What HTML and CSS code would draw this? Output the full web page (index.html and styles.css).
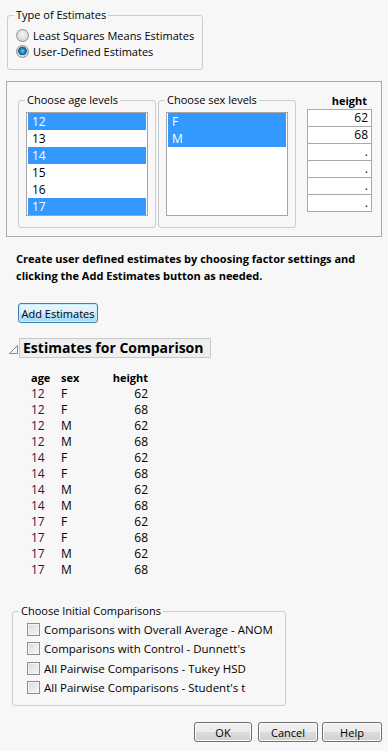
FILE: index.html
```html
<!DOCTYPE html>
<html>
    <head>
        <meta charset="UTF-8">
        <title>Estimates</title>
        <meta name="viewport" content="width=device-width, initial-scale=1.0">
        <link rel="stylesheet" href="styles.css">
    </head>
    <body>
        <div class="dialog">
            <fieldset class="group type-group">
                <legend>Type of Estimates</legend>
                <label class="radio-row"><span class="radio"></span>Least Squares Means Estimates</label>
                <label class="radio-row"><span class="radio checked"></span>User-Defined Estimates</label>
            </fieldset>

            <!-- factor level pickers and the response column -->
            <div class="panel">
                <fieldset class="group level-group">
                    <legend>Choose age levels</legend>
                    <ul class="listbox">
                        <li class="sel">12</li>
                        <li>13</li>
                        <li class="sel">14</li>
                        <li>15</li>
                        <li>16</li>
                        <li class="sel">17</li>
                    </ul>
                </fieldset>
                <fieldset class="group level-group sex-group">
                    <legend>Choose sex levels</legend>
                    <ul class="listbox">
                        <li class="sel">F</li>
                        <li class="sel">M</li>
                    </ul>
                </fieldset>
                <div class="resp-col">
                    <div class="resp-head">height</div>
                    <div class="cell">62</div>
                    <div class="cell">68</div>
                    <div class="cell">.</div>
                    <div class="cell">.</div>
                    <div class="cell">.</div>
                    <div class="cell last">.</div>
                </div>
            </div>

            <p class="hint">Create user defined estimates by choosing factor settings and<br>clicking the Add Estimates button as needed.</p>

            <button class="btn btn-focus add-btn">Add Estimates</button>

            <div class="outline">
                <svg class="disclosure" width="9" height="9" viewBox="0 0 9 9">
                    <polygon points="0.5,8.5 8.5,0.5 8.5,8.5" fill="#f4f4f4" stroke="#8a8a8a" stroke-width="1"/>
                </svg>
                <div class="outline-title">Estimates for Comparison</div>
            </div>

            <div class="est-table">
                <div class="th">age</div><div class="th">sex</div><div class="th num">height</div>
                <div class="age">12</div><div>F</div><div class="num">62</div>
                <div class="age">12</div><div>F</div><div class="num">68</div>
                <div class="age">12</div><div>M</div><div class="num">62</div>
                <div class="age">12</div><div>M</div><div class="num">68</div>
                <div class="age">14</div><div>F</div><div class="num">62</div>
                <div class="age">14</div><div>F</div><div class="num">68</div>
                <div class="age">14</div><div>M</div><div class="num">62</div>
                <div class="age">14</div><div>M</div><div class="num">68</div>
                <div class="age">17</div><div>F</div><div class="num">62</div>
                <div class="age">17</div><div>F</div><div class="num">68</div>
                <div class="age">17</div><div>M</div><div class="num">62</div>
                <div class="age">17</div><div>M</div><div class="num">68</div>
            </div>

            <fieldset class="group cmp-group">
                <legend>Choose Initial Comparisons</legend>
                <label class="check-row"><span class="check"></span>Comparisons with Overall Average - ANOM</label>
                <label class="check-row"><span class="check"></span>Comparisons with Control - Dunnett's</label>
                <label class="check-row"><span class="check"></span>All Pairwise Comparisons - Tukey HSD</label>
                <label class="check-row"><span class="check"></span>All Pairwise Comparisons - Student's t</label>
            </fieldset>

            <div class="actions">
                <button class="btn ok-btn">OK</button>
                <button class="btn cancel-btn">Cancel</button>
                <button class="btn help-btn">Help</button>
            </div>
        </div>
    </body>
</html>
```

FILE: styles.css
```css
body {
    margin: 0;
    background: #f7f7f7;
    font-family: "Open Sans", "Noto Sans", sans-serif;
    font-size: 11px;
    color: #000;
}
.dialog {
    width: 388px;
    height: 751px;
    overflow: hidden;
}

/* group boxes */
.group {
    margin: 0;
    padding: 0;
    border: 1px solid #c9cdd0;
    border-radius: 3px;
    box-sizing: border-box;
}
.group legend {
    margin-left: 6px;
    padding: 0 2px;
    line-height: 16px;
    height: 16px;
}
.type-group {
    margin: 7px 0 0 7px;
    width: 196px;
    padding: 4px 0 10px 0;
}
.radio-row,
.check-row {
    display: flex;
    align-items: center;
    height: 16px;
    white-space: nowrap;
}
.radio-row {
    margin-left: 8px;
}
.radio {
    width: 11px;
    height: 11px;
    border: 1px solid #8e8f8f;
    border-radius: 50%;
    background: radial-gradient(circle at 50% 40%, #f4f4f4, #d8d8d8 70%, #c4c4c4);
    margin-right: 4px;
    flex: none;
}
.radio.checked {
    background: radial-gradient(circle at 50% 45%, #7ed0f4 0, #2a8ec8 2px, #115a8a 4px, #d8d8d8 4.6px, #cfcfcf);
}

/* main panel */
.panel {
    margin: 11px 0 0 6px;
    width: 376px;
    box-sizing: border-box;
    border: 1px solid #a9a9a9;
    padding: 10px 0 8px 11px;
    display: flex;
    align-items: flex-start;
}
.level-group {
    width: 138px;
    padding: 4px 0 11px 0;
}
.sex-group {
    margin-left: 2px;
}
.listbox {
    list-style: none;
    margin: 0 0 0 7px;
    padding: 0 1px;
    width: 122px;
    height: 104px;
    box-sizing: border-box;
    border: 1px solid #a5a5a5;
    background: #fff;
}
.listbox li {
    height: 17px;
    line-height: 17px;
    padding-left: 4px;
    font-size: 12px;
}
.listbox li.sel {
    background: #3399ff;
    color: #fff;
}
.resp-col {
    margin-left: 11px;
    width: 65px;
}
.resp-head {
    height: 17px;
    line-height: 17px;
    text-align: right;
    padding-right: 5px;
    font-weight: bold;
}
.cell {
    height: 17px;
    line-height: 16px;
    box-sizing: border-box;
    border: 1px solid #a9a9a9;
    border-bottom: none;
    background: #fff;
    text-align: right;
    padding-right: 3px;
    font-size: 12px;
}
.cell.last {
    height: 18px;
    border-bottom: 1px solid #a9a9a9;
}

.hint {
    margin: 13px 0 0 16px;
    line-height: 17px;
    font-weight: bold;
    white-space: nowrap;
}

/* buttons */
.btn {
    font-family: inherit;
    font-size: 11px;
    color: #000;
    height: 20px;
    padding: 0;
    border: 1px solid #707070;
    border-radius: 3px;
    background: linear-gradient(#f2f2f2 0%, #ebebeb 50%, #dddddd 51%, #cfcfcf 100%);
    box-shadow: inset 0 0 0 1px #fbfbfb;
}
.btn-focus {
    border-color: #3c7fb1;
    background: linear-gradient(#eaf6fd 0%, #d9f0fc 50%, #bee6fd 51%, #a7d9f5 100%);
    box-shadow: inset 0 0 0 1px #c5ecfd;
}
.add-btn {
    display: block;
    margin: 19px 0 0 18px;
    width: 80px;
}

/* outline node */
.outline {
    margin-top: 15px;
    display: flex;
    align-items: center;
    height: 20px;
}
.disclosure {
    margin-left: 9px;
    margin-top: 2px;
}
.outline-title {
    margin-left: 1px;
    width: 192px;
    height: 20px;
    box-sizing: border-box;
    border: 1px solid #c8c8c8;
    background: #efefef;
    padding-left: 3px;
    font-size: 14px;
    font-weight: bold;
    line-height: 18px;
}

.est-table {
    margin: 12px 0 0 31px;
    display: grid;
    grid-template-columns: 30px 30px 57px;
    grid-auto-rows: 16px;
    line-height: 16px;
    font-size: 12px;
}
.est-table .th {
    font-weight: bold;
    font-size: 11px;
}
.est-table .num {
    text-align: right;
}
.est-table .age {
    color: #351048;
}

.cmp-group {
    margin: 25px 0 0 12px;
    width: 274px;
    padding: 1px 0 8px 0;
}
.check-row {
    height: 19.33px;
    margin-left: 14px;
    font-size: 11.5px;
}
.check {
    width: 11px;
    height: 11px;
    border: 1px solid #8e8f8f;
    background: linear-gradient(135deg, #dcdcdc, #f6f6f6);
    box-shadow: inset 0 0 0 1px #f4f4f4;
    margin-right: 4px;
    flex: none;
}

.actions {
    margin-top: 16px;
    display: flex;
    justify-content: flex-end;
    padding-right: 6px;
}
.ok-btn {
    width: 58px;
}
.cancel-btn {
    width: 60px;
    margin-left: 6px;
}
.help-btn {
    width: 60px;
    margin-left: 4px;
}
```
